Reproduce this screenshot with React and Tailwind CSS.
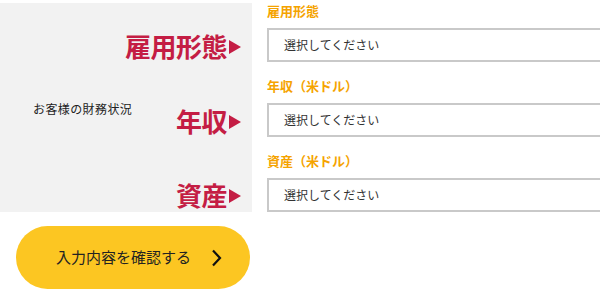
const fields = [
  { tag: '雇用形態', label: '雇用形態' },
  { tag: '年収', label: '年収（米ドル）' },
  { tag: '資産', label: '資産（米ドル）' },
]

const jp = { fontFamily: '"Noto Sans CJK JP", "Noto Sans", sans-serif' }

function Tag({ text }) {
  return (
    <div className="flex h-[34px] items-center justify-end whitespace-nowrap">
      <span className="text-[26px] font-bold leading-none tracking-[-0.5px] text-[#c41d44]">
        {text}
      </span>
      <svg width="13" height="14" viewBox="0 0 13 14" className="ml-[1px] mt-[2px] shrink-0">
        <polygon points="1,0 13,7 1,14" fill="#c41d44" />
      </svg>
    </div>
  )
}

export default function App() {
  return (
    <div className="h-[302px] w-[600px] overflow-hidden bg-white" style={jp}>
      <div className="flex">
        <div className="mt-[3px] flex h-[209px] w-[252px] shrink-0 bg-[#f2f2f2] pr-[11px]">
          <div className="flex min-w-0 flex-1 items-center pl-[33px] pt-[3px]">
            <span className="whitespace-nowrap text-[12px] tracking-[0.4px] text-[#222]">
              お客様の財務状況
            </span>
          </div>
          <div className="flex shrink-0 flex-col gap-[41px] pt-[26px]">
            {fields.map((f) => (
              <Tag key={f.tag} text={f.tag} />
            ))}
          </div>
        </div>

        <div className="ml-[15px] flex flex-1 flex-col gap-[14px] pt-[1px]">
          {fields.map((f) => (
            <div key={f.label}>
              <div className="mb-[7px] h-5 text-[13px] font-bold leading-5 text-[#f5a300]">
                {f.label}
              </div>
              <div className="flex h-[34px] w-[360px] items-center border-2 border-[#c9c9c9] pl-[15px] text-[12px] text-[#333]">
                選択してください
              </div>
            </div>
          ))}
        </div>
      </div>

      <button className="ml-[16px] mt-[14px] flex h-[63px] w-[234px] items-center rounded-full bg-[#fcc622] pl-[40px] text-[15px] text-[#222]">
        <span>入力内容を確認する</span>
        <svg width="11" height="18" viewBox="0 0 11 18" className="ml-[20px]">
          <polyline points="2,1.5 9,9 2,16.5" fill="none" stroke="#111" strokeWidth="2.2" />
        </svg>
      </button>
    </div>
  )
}
